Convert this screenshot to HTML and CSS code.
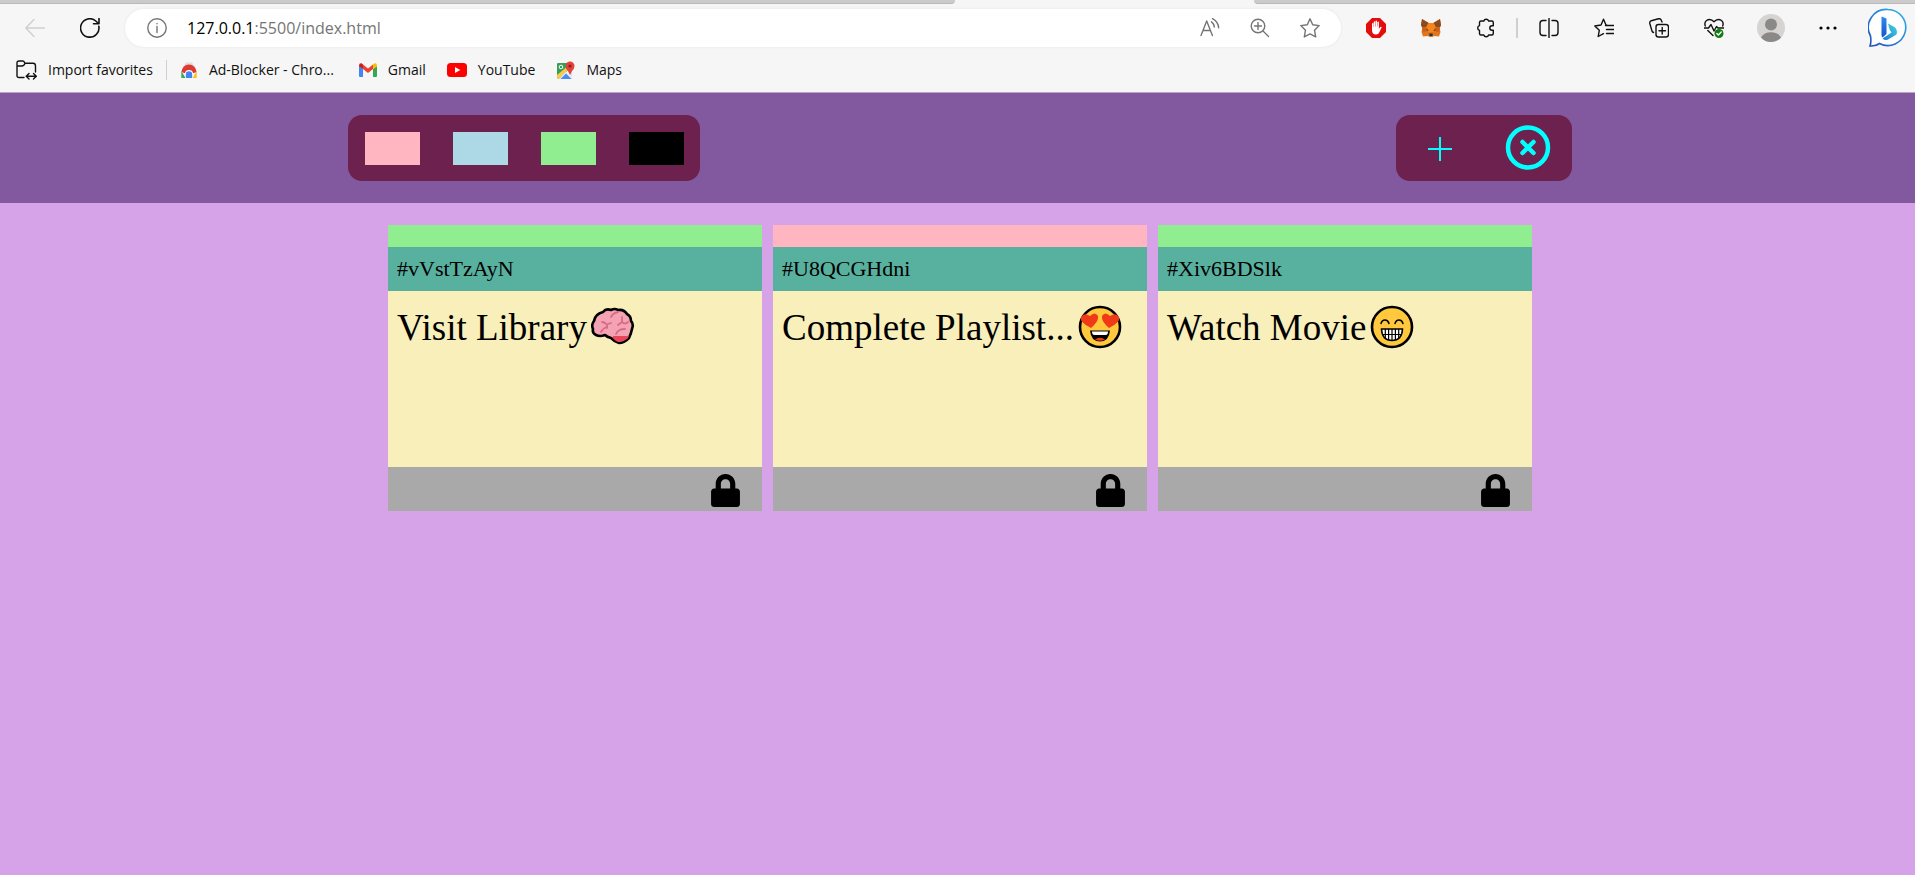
FILE: index.html
```html
<!DOCTYPE html>
<html lang="en">
<head>
<meta charset="utf-8">
<title>Sticky tasks</title>
<meta name="viewport" content="width=device-width, initial-scale=1">
<link rel="stylesheet" href="styles.css">
</head>
<body>
<header class="browser">
  <div class="tabs"><span class="tab tab-left"></span><span class="tab-active"></span><span class="tab tab-right"></span></div>
  <div class="toolbar">
    <div class="nav">
      <button class="tool" aria-label="Back" disabled><svg width="20" height="20" viewBox="0 0 20 20" class="line faint"><path d="M20 10H1M9 1.500L.8 10 9 18.500"/></svg></button>
      <button class="tool" aria-label="Refresh"><svg width="20" height="20" viewBox="0 0 20 20" class="line reload"><path d="M18.800 8.200A9.200 9.200 0 1 1 15.800 3L18.500 5.500M19 .5V5.800H13.500"/></svg></button>
    </div>
    <div class="address">
      <button class="info" aria-label="View site information"><svg width="20" height="20" viewBox="0 0 20 20" class="line gray"><circle cx="10" cy="10" r="9.200"/><path d="M10 8.500V14.500M10 5.500V5.700"/></svg></button>
      <div class="url" role="textbox" contenteditable="true" spellcheck="false" aria-label="Address"><span class="host">127.0.0.1</span>:5500/index.html</div>
      <div class="address-tools">
        <button class="small-tool" aria-label="Read aloud"><svg width="20" height="20" viewBox="0 0 20 20" class="line gray"><path d="M1 17.500L6.700 3 12.400 17.500M3 12.500H10.500M11.500 3.800Q14 5.500 14.300 9M12.500.7Q18 3.500 18.700 9.800"/></svg></button>
        <button class="small-tool" aria-label="Zoom"><svg width="20" height="20" viewBox="0 0 20 20" class="line gray"><circle cx="8" cy="8" r="6.800"/><path d="M13 13L18.500 18.500M8 4.500V11.500M4.500 8H11.500"/></svg></button>
        <button class="small-tool" aria-label="Add to favorites"><svg width="20" height="20" viewBox="0 0 20 20" class="line gray"><path d="M10 .8L12.700 6.700 19.200 7.600 14.500 12.200 15.700 18.900 10 15.900 4.300 18.900 5.500 12.200.8 7.600 7.300 6.700Z"/></svg></button>
      </div>
    </div>
    <div class="extensions">
      <button class="tool" aria-label="AdBlock"><svg width="20" height="20" viewBox="0 0 20 20"><path fill="#e40d0d" d="M6 0H14L20 6V14L14 20H6L0 14V6Z"/><path fill="#fff" d="M6 5.500Q6.700 4.500 7.400 5.500V9H7.700V3.700Q8.400 2.700 9.100 3.700V8.500H9.500V3Q10.200 2 11 3V8.500H11.400V4Q12.100 3 12.900 4V11L14.200 9Q15.300 8.300 15.700 9.200L13.500 14Q12.500 16.500 10 16.500 6 16.500 6 12Z"/></svg></button>
      <button class="tool" aria-label="MetaMask"><svg width="20" height="20" viewBox="0 0 20 20"><path fill="#e2761b" d="M1 1L8 5H12L19 1 20 7 18.500 10 19.500 14 18 18.500 13 18 11.500 19H8.500L7 18 2 18.500.5 14 1.500 10 0 7Z"/><path fill="#8a4b20" d="M1 1L7.500 5 5 9 1 9.500 0 7ZM19 1L12.500 5 15 9 19 9.500 20 7Z"/><path fill="#f6851b" d="M7.500 5H12.500L15 10 13 14H7L5 10Z"/><path fill="#cd6116" d="M1 10L6 9.500 7 13 2 14ZM19 10L14 9.500 13 13 18 14Z"/><path fill="#233447" d="M5.500 11L8 12.500 6 12.500ZM14.500 11L12 12.500 14 12.500ZM8.300 15.500H11.700L11.500 18H8.500Z"/></svg></button>
      <button class="tool" aria-label="Extensions"><svg width="20" height="20" viewBox="0 0 20 20" class="line"><path d="M7.800 3A2.500 2.500 0 0 1 12.600 3H15.800Q17.300 3 17.300 4.500V7.800H16A2.200 2.200 0 0 0 16 12.200H17.300V15.500Q17.300 17 15.800 17H12.600A2.500 2.500 0 0 1 7.800 17H5Q3.500 17 3.500 15.500V12.400A2.500 2.500 0 0 1 3.500 7.600V4.500Q3.500 3 5 3Z"/></svg></button>
      <span class="tool-divider"></span>
      <button class="tool" aria-label="Split screen"><svg width="20" height="20" viewBox="0 0 20 20" class="line"><path d="M7 2.500H4Q1 2.500 1 5.500V14.500Q1 17.500 4 17.500H7M13 2.500H16Q19 2.500 19 5.500V14.500Q19 17.500 16 17.500H13M10 .5V19.500"/></svg></button>
      <button class="tool" aria-label="Favorites"><svg width="20" height="20" viewBox="0 0 20 20" class="line"><path d="M13.500 7.500L12 7 9.500 1.200 7 7 .8 8 5.300 12.300 4.200 18.500 9.500 15.700M11.500 7.500H20M12.500 11.500H20M12.500 15.500H20"/></svg></button>
      <button class="tool" aria-label="Collections"><svg width="20" height="20" viewBox="0 0 20 20" class="line"><rect x="7" y="6.500" width="12.500" height="12.500" rx="2.500"/><path d="M13.200 9.500V16M10 12.800H16.500M4.500 14.500Q3.300 14 3 13L.8 5.500Q.4 3.500 2.300 2.700L9.500.8Q11.500.3 12.300 2.200L13 4"/></svg></button>
      <button class="tool" aria-label="Browser essentials"><svg width="20" height="20" viewBox="0 0 20 20" class="line"><path d="M1.300 8Q0 4.500 2.500 2.500 6.500 0 10 3.800 13.500 0 17.500 2.500 20 4.500 18.700 8M0 10H4.500L7 6.500 10 13 12.500 8.500 14 10H20M3.800 12.500L9 17.500"/><circle cx="15" cy="15.500" r="4.500" class="ok"/><path class="tick" d="M12.900 15.500L14.400 17 17.200 14"/></svg></button>
      <button class="tool profile" aria-label="Profile"><svg width="28" height="28" viewBox="0 0 28 28"><circle cx="14" cy="14" r="14" fill="#d5d4d2"/><circle cx="14" cy="10.500" r="6" fill="#8b8987"/><path fill="#8b8987" d="M4 23.500Q7 18.300 14 18.300 21 18.300 24 23.500 20 28 14 28 8 28 4 23.500Z"/></svg></button>
      <button class="tool" aria-label="Settings and more"><svg width="18" height="4" viewBox="0 0 18 4"><circle cx="2" cy="2" r="1.600"/><circle cx="9" cy="2" r="1.600"/><circle cx="16" cy="2" r="1.600"/></svg></button>
      <button class="tool bing" aria-label="Bing Chat"><svg width="40" height="40" viewBox="0 0 40 40">
        <defs><linearGradient id="ring" x1="1" y1="0" x2="0" y2="1"><stop offset="0" stop-color="#2fb8ea"/><stop offset=".5" stop-color="#2a80d8"/><stop offset="1" stop-color="#1d4fb8"/></linearGradient><linearGradient id="stem" x1="0" y1="0" x2="0" y2="1"><stop offset="0" stop-color="#2f8cf0"/><stop offset="1" stop-color="#1552cc"/></linearGradient><linearGradient id="bowl" x1="1" y1="0" x2="0" y2="1"><stop offset="0" stop-color="#43d9d0"/><stop offset="1" stop-color="#1b79e6"/></linearGradient></defs>
        <path d="M20 1.500A18 18 0 1 1 11.500 35.500Q7.500 38.500 2 38 3.500 34 2.500 28A18 18 0 0 1 20 1.500Z" fill="#fff" stroke="url(#ring)" stroke-width="1.600"/>
        <path fill="url(#stem)" d="M13.500 8.500L18.500 10.500V26L14.500 29.500Q13.500 28.500 13.500 27Z"/><path fill="url(#bowl)" d="M20 15.500L26.500 19Q30 22 28.500 26.500L20 31.500Q17 33 14.500 30.500L23.500 24.500 21.800 22Z"/></svg></button>
    </div>
  </div>
  <nav class="favorites" aria-label="Favorites bar">
    <button class="favorite import"><svg width="21" height="20" viewBox="0 0 21 20" class="line"><path d="M8 17.500H3Q1 17.500 1 15.500V3Q1 1 3 1H7Q8 1 9 3.300H17Q19.500 3.300 19.500 6V12M1 6H6Q8 6 9 3.300M10.500 16.300H20M13 13.500L10.200 16.300 13 19M17.500 13.500L20.300 16.300 17.500 19"/></svg>Import favorites</button>
    <span class="favorite-divider"></span>
    <a class="favorite adblock" href="#adblock"><svg width="18" height="18" viewBox="0 0 18 18"><path d="M3 6L6 1.500H12L15 6Z" fill="#dedede"/><path d="M1.500 11A7.500 7.500 0 0 1 16.500 11L14 12H4Z" fill="#df3a30"/><path d="M1.300 10L5.500 17H1.300Z" fill="#34a853"/><path d="M16.700 10L12.500 17H16.700Z" fill="#fbc116"/><path d="M5 17V13A4 4 0 0 1 13 13V17Z" fill="#fff"/><path d="M5.800 17V13.500A3.200 3.200 0 0 1 12.200 13.500V17Z" fill="#4285f4"/></svg>Ad-Blocker - Chro...</a>
    <a class="favorite gmail" href="#gmail"><svg width="18" height="14" viewBox="0 0 18 14"><path fill="#4285f4" d="M0 3L4 6V14H1Q0 14 0 13Z"/><path fill="#34a853" d="M18 3L14 6V14H17Q18 14 18 13Z"/><path fill="#ea4335" d="M4 1.500L9 5.500 14 1.500V6L9 10 4 6Z"/><path fill="#c5221f" d="M0 2.500Q0 0 2.500.3L4 1.500V6L0 3.500Z"/><path fill="#fbbc04" d="M18 2.500Q18 0 15.500.3L14 1.500V6L18 3.500Z"/></svg>Gmail</a>
    <a class="favorite youtube" href="#youtube"><svg width="20" height="14" viewBox="0 0 20 14"><rect width="20" height="14" rx="3.500" fill="#f00"/><path d="M8 4L13.300 7 8 10Z" fill="#fff"/></svg>YouTube</a>
    <a class="favorite maps" href="#maps"><svg width="19" height="19" viewBox="0 0 19 19"><path fill="#34a056" d="M2 2H12V9L3 18Q1 18 1 16V3Q1 2 2 2Z"/><path fill="#fbc94a" d="M1 14L12 5V8.500L3 18Q1 18 1 16Z"/><path fill="#e8eaed" d="M3 18L10 10.500 17 17.500 15 18Z"/><path fill="#4a8af4" d="M4.500 18L10 12.500 15.500 18Z"/><path fill="#dadce0" d="M12 10L16 8V16Z"/><circle cx="5" cy="6" r="1.800" fill="none" stroke="#fff"/><path fill="#e0443a" d="M14 .5A4.500 4.500 0 0 1 18.500 5Q18.500 7.500 16 10L14 14 12 10Q9.500 7.500 9.500 5A4.500 4.500 0 0 1 14 .5Z"/><circle cx="14" cy="5" r="1.600" fill="#8f1f1a"/></svg>Maps</a>
  </nav>
</header>
<main class="app">
  <div class="app-bar">
    <div class="panel filters">
      <button class="cell" aria-label="Filter pink"><span class="swatch pink"></span></button>
      <button class="cell" aria-label="Filter blue"><span class="swatch blue"></span></button>
      <button class="cell" aria-label="Filter green"><span class="swatch green"></span></button>
      <button class="cell" aria-label="Filter black"><span class="swatch black"></span></button>
    </div>
    <div class="panel actions">
      <button class="cell" aria-label="Add task"><svg width="24" height="30" viewBox="0 0 24 30"><path d="M12 4V28M0 16H24" stroke="#0ff" stroke-width="2"/></svg></button>
      <button class="cell" aria-label="Remove task"><svg width="46" height="46" viewBox="0 0 46 46" fill="none" stroke="#0ff" stroke-linecap="round"><circle cx="23" cy="22.500" r="20" stroke-width="4.500"/><path d="M17.500 17L28.500 28M28.500 17L17.500 28" stroke-width="4.500"/></svg></button>
    </div>
  </div>
  <div class="board">
    <article class="ticket">
      <div class="ticket-color green"></div>
      <div class="ticket-id">#vVstTzAyN</div>
      <div class="ticket-text">Visit Library<svg class="emoji" width="44" height="44" viewBox="0 0 44 44" role="img" aria-label="brain"><path fill="#f4a3b5" stroke="#000" stroke-width="2.600" stroke-linejoin="round" d="M12 7Q15 3 20 5 24 3 27 5 33 4 36 9 40 11 40 16 43 19 41 24 40 29 38 33 33 38 28 38 24 37 20 33 16 32 14 30 9 32 5 30 1 28 2 24 0 20 3 16 4 9 12 7Z"/><path fill="#e8475a" d="M22 31H38L36.500 33.500Q32 37 28 37 25 37 22 33Z"/><path fill="none" stroke="#d96c85" stroke-width="1.800" stroke-linecap="round" d="M20 12Q22 8 27 7M11 17Q17 18 16 23M17 19L20 18M10 27Q12 23 16 22M31 12V17Q34 20 37 17M27 20L31 17M25 29Q27 24 34 24"/></svg></div>
      <div class="ticket-foot"><button class="lock" aria-label="Unlock task"><svg width="29" height="33" viewBox="0 0 448 512"><path d="M400 224h-24v-72C376 68.200 307.800 0 224 0S72 68.200 72 152v72H48c-26.500 0-48 21.500-48 48v192c0 26.500 21.500 48 48 48h352c26.500 0 48-21.500 48-48V272c0-26.500-21.500-48-48-48zm-104 0H152v-72c0-39.700 32.300-72 72-72s72 32.300 72 72v72z"/></svg></button></div>
    </article>
    <article class="ticket">
      <div class="ticket-color pink"></div>
      <div class="ticket-id">#U8QCGHdni</div>
      <div class="ticket-text">Complete Playlist...<svg class="emoji" width="44" height="44" viewBox="0 0 44 44" role="img" aria-label="smiling face with heart eyes"><circle cx="22" cy="22" r="20" fill="#ffc83d" stroke="#000" stroke-width="2.600"/><path fill="#f03a17" d="M13 23Q1 17 3 12 6 7 12 11 17 6 20 11 21 16 13 23ZM31 23Q23 16 24 11 27 6 32 11 38 7 41 12 43 17 31 23Z"/><path d="M12 25.500H32Q31 36.500 22 36.500 13 36.500 12 25.500Z"/><path fill="#fff" d="M14 26.500H30Q30 30 27.500 30H16.500Q14 30 14 26.500Z"/><path fill="#f03a17" d="M17 34.500Q22 31 27 34.500 22 37 17 34.500Z"/></svg></div>
      <div class="ticket-foot"><button class="lock" aria-label="Unlock task"><svg width="29" height="33" viewBox="0 0 448 512"><path d="M400 224h-24v-72C376 68.200 307.800 0 224 0S72 68.200 72 152v72H48c-26.500 0-48 21.500-48 48v192c0 26.500 21.500 48 48 48h352c26.500 0 48-21.500 48-48V272c0-26.500-21.500-48-48-48zm-104 0H152v-72c0-39.700 32.300-72 72-72s72 32.300 72 72v72z"/></svg></button></div>
    </article>
    <article class="ticket">
      <div class="ticket-color green"></div>
      <div class="ticket-id">#Xiv6BDSlk</div>
      <div class="ticket-text">Watch Movie<svg class="emoji" width="44" height="44" viewBox="0 0 44 44" role="img" aria-label="beaming face"><circle cx="22" cy="22" r="20" fill="#ffc83d" stroke="#000" stroke-width="2.600"/><path fill="none" stroke="#000" stroke-width="1.500" stroke-linecap="round" d="M11 18.500Q12 15 15 15 18 15 19 18.500M25 18.500Q26 15 29 15 32 15 33 18.500"/><path fill="#fff" stroke="#000" stroke-width="1.500" d="M11.500 24H32.500Q32 35.500 22 35.500 12 35.500 11.500 24Z"/><path stroke="#000" stroke-width="1.200" d="M12.500 29.500H31.500M15.300 24V33M18.600 24V35M22 24V35.500M25.400 24V35M28.700 24V33"/></svg></div>
      <div class="ticket-foot"><button class="lock" aria-label="Unlock task"><svg width="29" height="33" viewBox="0 0 448 512"><path d="M400 224h-24v-72C376 68.200 307.800 0 224 0S72 68.200 72 152v72H48c-26.500 0-48 21.500-48 48v192c0 26.500 21.500 48 48 48h352c26.500 0 48-21.500 48-48V272c0-26.500-21.500-48-48-48zm-104 0H152v-72c0-39.700 32.300-72 72-72s72 32.300 72 72v72z"/></svg></button></div>
    </article>
  </div>
</main>
</body>
</html>
```

FILE: styles.css
```css
* { box-sizing: border-box; }

body {
  margin: 0;
  min-height: 100vh;
  display: flex;
  flex-direction: column;
  overflow-x: hidden;
  background: #d6a2e8;
  font-family: "Liberation Serif", serif;
  color: #000;
}

button {
  margin: 0;
  padding: 0;
  border: 0;
  background: none;
  font: inherit;
  color: inherit;
  cursor: pointer;
}

svg { display: block; flex: none; }

/* Browser frame */
.browser {
  background: #f6f6f6;
  border-bottom: 1px solid #b9a5c6;
  font-family: "Open Sans", "Noto Sans", sans-serif;
}

.tabs { display: flex; height: 4px; }
.tab { background: #cbcbcb; border-bottom: 1px solid #b9b9b9; }
.tab-left { flex: 955; border-bottom-right-radius: 4px; }
.tab-active { flex: 299; }
.tab-right { flex: 661; border-bottom-left-radius: 4px; }

.toolbar { display: flex; align-items: center; height: 48px; }
.nav { display: flex; padding: 0 8px 0 7px; }

.tool {
  display: flex;
  align-items: center;
  justify-content: center;
  width: 55px;
  height: 40px;
}

.line {
  fill: none;
  stroke: #111;
  stroke-width: 1.4;
  stroke-linecap: round;
  stroke-linejoin: round;
}
.faint { stroke: #cfcfcf; }
.gray { stroke: #757575; }
.reload { stroke-width: 1.6; }
.line .ok { fill: #107c10; stroke: none; }
.line .tick { stroke: #fff; }

.address {
  flex: 1;
  display: flex;
  align-items: center;
  height: 38px;
  padding: 0 21px 0 22px;
  border-radius: 19px;
  background: #fff;
  box-shadow: 0 0 3px #e4e4e4;
}
.url {
  flex: 1;
  margin-left: 20px;
  font-size: 16px;
  line-height: 24px;
  color: #757575;
  outline: 0;
}
.host { color: #000; }
.address-tools { display: flex; gap: 30px; }

.extensions { display: flex; align-items: center; padding: 0 7px; }
.tool-divider { width: 2px; height: 20px; margin: 0 3px; background: #cfcfcf; }
.profile { width: 59px; }
.bing { justify-content: flex-end; width: 53px; }

.favorites {
  display: flex;
  align-items: center;
  height: 40px;
  padding: 0 16px 4px;
  font-size: 14px;
  line-height: 20px;
}
.favorite {
  display: flex;
  align-items: center;
  gap: 11px;
  color: #111;
  text-decoration: none;
  white-space: nowrap;
}
.favorite-divider { width: 1px; height: 20px; margin: 0 13px; background: #cfcfcf; }
.gmail { margin-left: 25px; }
.youtube, .maps { margin-left: 21px; }

/* Task board */
.app { flex: 1; margin-right: -5px; }

.app-bar {
  display: flex;
  align-items: center;
  justify-content: space-around;
  height: 110px;
  background: #82589f;
}

.panel {
  display: flex;
  height: 66px;
  border-radius: 14px;
  background: #6d214f;
}
.cell {
  display: flex;
  align-items: center;
  justify-content: center;
  width: 88px;
  height: 66px;
}
.swatch { width: 55px; height: 33px; }

.pink { background: lightpink; }
.blue { background: lightblue; }
.green { background: lightgreen; }
.black { background: #000; }

.board {
  display: flex;
  flex-wrap: wrap;
  justify-content: center;
  gap: 11px;
  padding: 22px;
}
.ticket { width: 374px; }
.ticket-color { height: 22px; }
.ticket-id {
  padding: 0 9px;
  background: #58b19f;
  font-size: 22px;
  line-height: 44px;
}
.ticket-text {
  display: flex;
  align-items: flex-start;
  min-height: 176px;
  padding: 14px 9px;
  background: #f8efba;
  font-size: 37px;
  line-height: 46px;
  white-space: nowrap;
}
.emoji { margin-left: 4px; }
.ticket-foot {
  display: flex;
  align-items: center;
  justify-content: flex-end;
  height: 44px;
  padding: 2px 22px 0;
  background: #a9a9a9;
}
```
